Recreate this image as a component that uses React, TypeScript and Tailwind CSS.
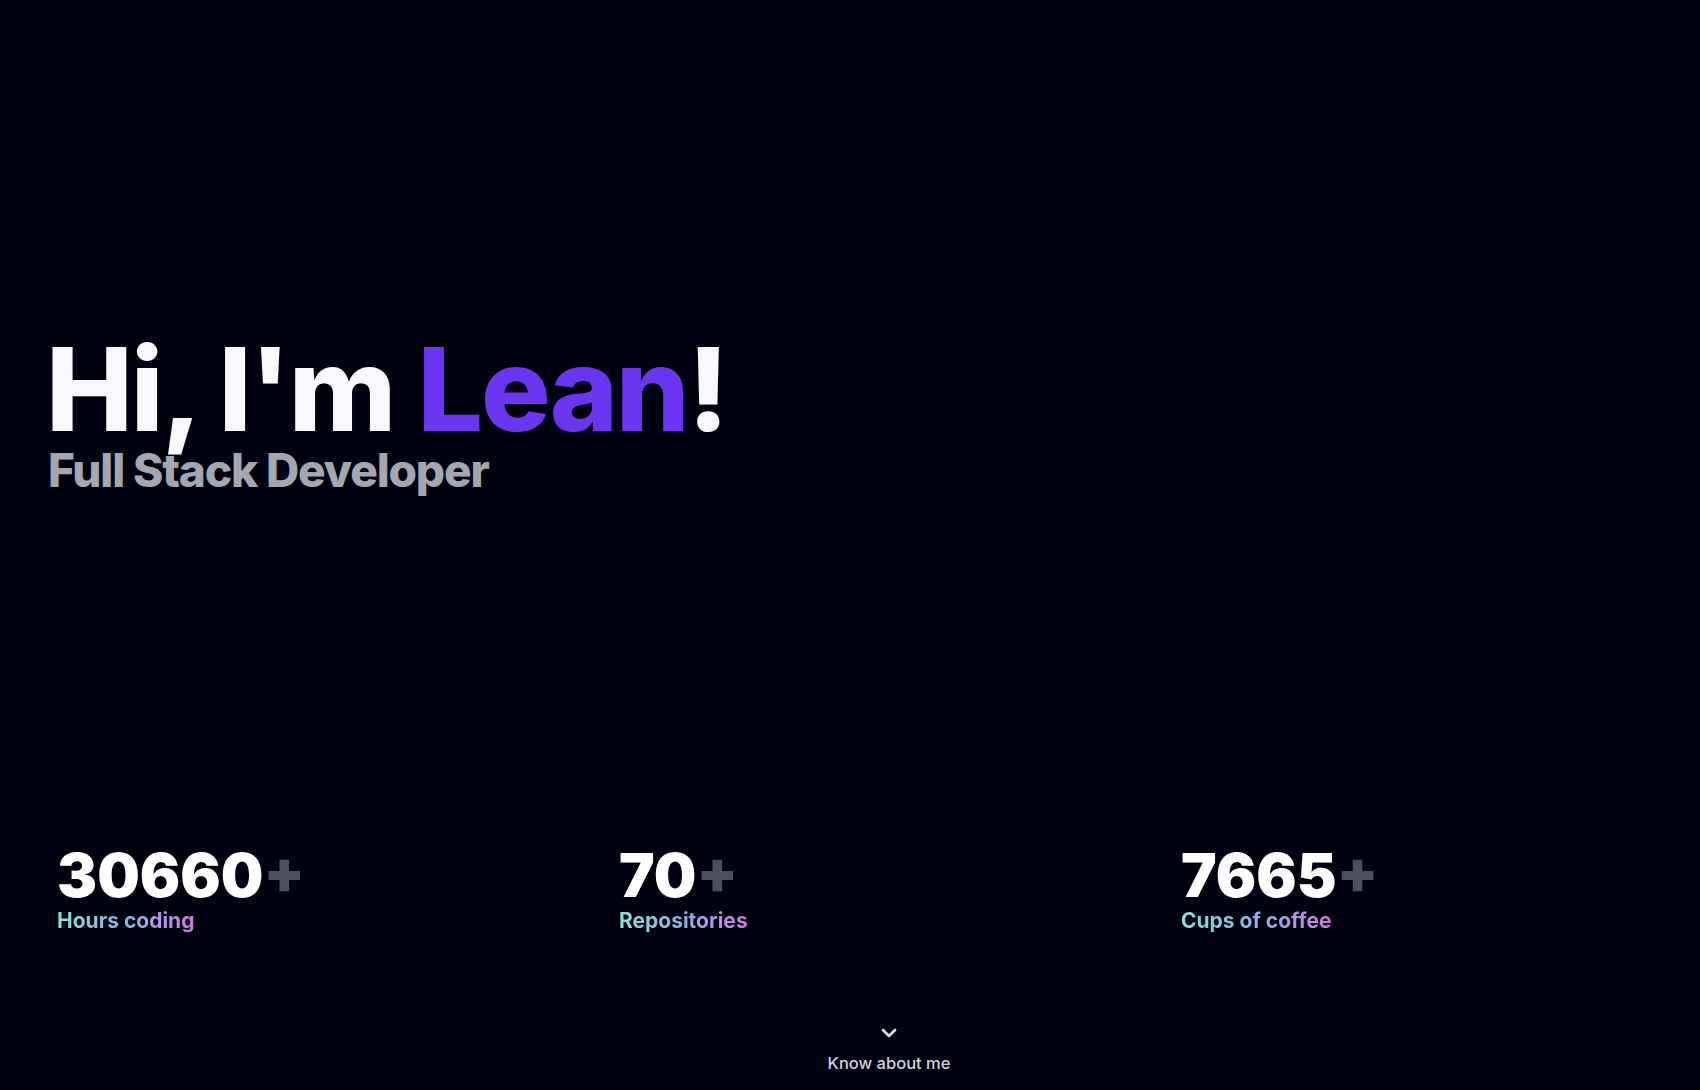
import { ChevronDown } from 'lucide-react';

const stats = [
  { value: '30660', label: 'Hours coding' },
  { value: '70', label: 'Repositories' },
  { value: '7665', label: 'Cups of coffee' },
];

export default function App() {
  return (
    <main
      className="flex flex-col h-[1090px] w-full bg-[#01020f] text-white overflow-hidden"
      style={{ fontFamily: 'Inter, "Noto Sans", sans-serif' }}
    >
      <section className="flex flex-col pt-[331px] pl-[46px]">
        <h1 className="text-[116px] leading-none font-extrabold tracking-[-0.018em] text-[#faf8ff]">
          Hi, I'm <span className="text-[#6b35f2]">Lean</span>!
        </h1>
        <h2 className="text-[46px] leading-none font-extrabold tracking-[-0.025em] text-[#a3a7b0] pl-[2px]">
          Full Stack Developer
        </h2>
      </section>

      <section className="grid grid-cols-[562px_562px_1fr] pl-[57px] mt-[352px]">
        {stats.map((s) => (
          <div key={s.label} className="flex flex-col">
            <p className="text-[60px] leading-none font-black">
              {s.value}
              <span className="text-[#4b505c]">+</span>
            </p>
            <p className="text-[21px] leading-7 mt-[2px] font-bold w-fit bg-gradient-to-r from-[#8ae4cc] via-[#8fb0e6] to-[#d176e2] bg-clip-text text-transparent">
              {s.label}
            </p>
          </div>
        ))}
      </section>

      <div className="flex flex-col items-center w-full pl-[78px] mt-auto mb-[14px] gap-[6px]">
        <ChevronDown size={24} strokeWidth={2.75} className="text-[#d8dae0]" />
        <span className="text-[16.5px] font-medium text-[#d1d3da]">Know about me</span>
      </div>
    </main>
  );
}
